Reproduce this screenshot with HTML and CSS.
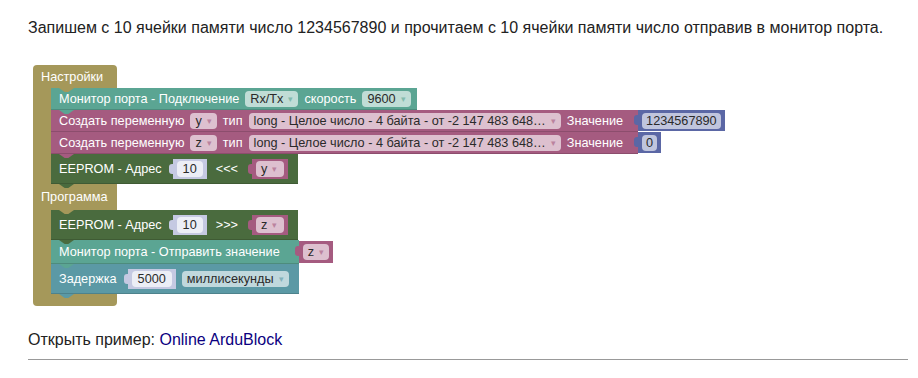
FILE: index.html
```html
<!DOCTYPE html>
<html lang="ru">
<head>
    <meta charset="UTF-8">
    <title>EEPROM пример</title>
    <link rel="stylesheet" href="styles.css">
</head>
<body>
    <div class="page">
        <p class="intro">Запишем с 10 ячейки памяти число 1234567890 и прочитаем с 10 ячейки памяти число отправив в монитор порта.</p>

        <div class="workspace">
            <div class="c-block">
                <div class="c-label">Настройки</div>
                <div class="c-body">
                    <!-- Serial begin -->
                    <div class="stmt teal">
                        <div class="body">
                            <span>Монитор порта - Подключение</span>
                            <span class="dd">Rx/Tx <i class="arr">▾</i></span>
                            <span>скорость</span>
                            <span class="dd">9600 <i class="arr">▾</i></span>
                        </div>
                    </div>
                    <!-- Variables -->
                    <div class="stmt pink">
                        <div class="body ext-body">
                            <span>Создать переменную</span>
                            <span class="dd">y <i class="arr">▾</i></span>
                            <span>тип</span>
                            <span class="dd">long - Целое число - 4 байта - от -2 147 483 648… <i class="arr">▾</i></span>
                            <span>Значение</span>
                        </div>
                        <div class="ext blue"><span class="fld">1234567890</span></div>
                    </div>
                    <div class="stmt pink">
                        <div class="body ext-body">
                            <span>Создать переменную</span>
                            <span class="dd">z <i class="arr">▾</i></span>
                            <span>тип</span>
                            <span class="dd">long - Целое число - 4 байта - от -2 147 483 648… <i class="arr">▾</i></span>
                            <span>Значение</span>
                        </div>
                        <div class="ext blue"><span class="fld">0</span></div>
                    </div>
                    <!-- EEPROM write -->
                    <div class="stmt green">
                        <div class="body tall">
                            <span>EEPROM - Адрес</span>
                            <span class="shadow"><span class="fld">10</span></span>
                            <span class="op">&lt;&lt;&lt;</span>
                            <span class="inl pink"><span class="dd">y <i class="arr">▾</i></span></span>
                        </div>
                    </div>
                </div>

                <div class="c-label c-mid">Программа</div>
                <div class="c-body">
                    <!-- EEPROM read -->
                    <div class="stmt green">
                        <div class="body tall">
                            <span>EEPROM - Адрес</span>
                            <span class="shadow"><span class="fld">10</span></span>
                            <span class="op">&gt;&gt;&gt;</span>
                            <span class="inl pink"><span class="dd">z <i class="arr">▾</i></span></span>
                        </div>
                    </div>
                    <!-- Serial print -->
                    <div class="stmt teal">
                        <div class="body mid ext-body">
                            <span>Монитор порта - Отправить значение</span>
                        </div>
                        <div class="ext pink"><span class="dd">z <i class="arr">▾</i></span></div>
                    </div>
                    <!-- Delay -->
                    <div class="stmt sky">
                        <div class="body tall">
                            <span>Задержка</span>
                            <span class="shadow"><span class="fld">5000</span></span>
                            <span class="dd">миллисекунды <i class="arr">▾</i></span>
                        </div>
                    </div>
                </div>
                <div class="c-foot"></div>
            </div>
        </div>

        <p class="open">Открыть пример: <a href="#">Online ArduBlock</a></p>
        <hr class="rule">
    </div>
</body>
</html>
```

FILE: styles.css
```css
body {
    margin: 0;
    font-family: "Liberation Sans", Arial, sans-serif;
    color: #222;
    background-color: #fff;
}

.page {
    padding: 17px 10px 0 28px;
}

.intro {
    margin: 0;
    font-size: 16px;
    line-height: 22px;
}

/* Block workspace */
.workspace {
    margin-top: 26px;
    padding-left: 5px;
    font-size: 12.7px;
    color: #fff;
}

.c-block {
    --olive: #a5985a;
    display: inline-flex;
    flex-direction: column;
    align-items: flex-start;
}

.c-label {
    --c: #a5985a;
    position: relative;
    width: 84px;
    height: 23px;
    box-sizing: border-box;
    padding-left: 8px;
    display: flex;
    align-items: center;
    background-color: var(--c);
    border-radius: 4px 4px 0 0;
}

.c-label::after,
.stmt::after {
    content: "";
    position: absolute;
    left: 26px;
    top: 100%;
    width: 15px;
    height: 4px;
    background-color: var(--c);
    clip-path: polygon(0 0, 100% 0, 62% 100%, 38% 100%);
    z-index: 2;
}

.c-mid {
    height: 26px;
    border-radius: 0;
}

.c-body {
    display: flex;
    flex-direction: column;
    align-items: flex-start;
    border-left: 18px solid var(--olive);
}

.c-foot {
    width: 84px;
    height: 12px;
    background-color: var(--olive);
    border-radius: 0 0 4px 4px;
}

/* Statement blocks */
.stmt {
    position: relative;
    display: flex;
    align-items: flex-start;
}

.stmt::after {
    left: 8px;
}

.teal  { --c: #5ba593; }
.pink  { --c: #a55b80; }
.green { --c: #4a6b3e; }
.sky   { --c: #5b99a5; }
.blue  { --c: #5b67a5; }

.body {
    display: flex;
    align-items: center;
    gap: 6px;
    height: 22px;
    padding: 0 6px 0 8px;
    background-color: var(--c);
    box-shadow: inset 0 -1px rgba(0, 0, 0, 0.15);
    white-space: nowrap;
}

.ext-body {
    padding-right: 15px;
}

.body.tall {
    height: 30px;
    padding-right: 10px;
}

.body.mid {
    height: 24px;
    padding-right: 19px;
}

/* Value blocks */
.ext,
.inl,
.shadow {
    position: relative;
    display: flex;
    align-items: center;
    height: 21px;
    padding: 0 4px;
    background-color: var(--c);
}

.ext::before,
.inl::before,
.shadow::before {
    content: "";
    position: absolute;
    left: -4px;
    top: 5px;
    width: 5px;
    height: 10px;
    border-radius: 3px 0 0 3px;
    background-color: var(--c);
}

.ext.pink {
    height: 22px;
    margin-top: 1px;
}

.shadow {
    --c: #c5c9e2;
    height: 20px;
    margin-left: 5px;
}

.inl {
    height: 20px;
    margin-left: 5px;
}

.op {
    padding: 0 3px;
}

/* Fields */
.fld,
.dd {
    display: flex;
    align-items: center;
    gap: 5px;
    height: 16px;
    padding: 0 5px;
    border-radius: 4px;
    background-color: rgba(255, 255, 255, 0.62);
    color: #2a2a2a;
}

.inl .dd {
    padding-right: 7px;
}

.fld {
    padding: 0 4px;
}

.shadow .fld {
    padding: 0 6px;
    background-color: #eceef6;
}

.arr {
    font-style: normal;
    font-size: 9px;
    color: var(--c);
    opacity: 0.6;
}

/* Footer */
.open {
    margin: 23px 0 0;
    font-size: 16px;
    line-height: 22px;
}

.open a {
    color: #0b0080;
    text-decoration: none;
}

.rule {
    margin: 8px 0 0;
    border: none;
    border-top: 1px solid #999;
}
```
